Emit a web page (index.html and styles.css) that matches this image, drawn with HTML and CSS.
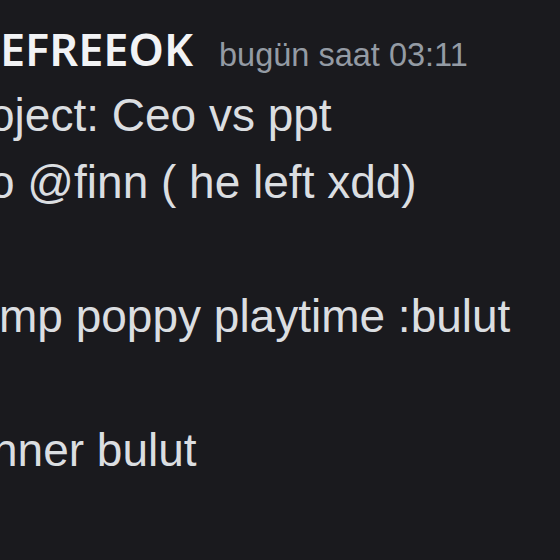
FILE: index.html
```html
<!DOCTYPE html>
<html lang="tr">
<head>
<meta charset="utf-8">
<link rel="stylesheet" href="styles.css">
</head>
<body>
<div class="chat">
  <div class="message">
    <div class="header">
      <span class="username">EFREEOK</span>
      <span class="timestamp">bugün saat 03:11</span>
    </div>
    <div class="content">
      <div class="line cut-o">oject: Ceo vs ppt</div>
      <div class="line cut-o">o @finn ( he left xdd)</div>
      <div class="line empty">&nbsp;</div>
      <div class="line cut-m">mp poppy playtime :bulut</div>
      <div class="line empty">&nbsp;</div>
      <div class="line cut-n">nner bulut</div>
    </div>
  </div>
</div>
</body>
</html>
```

FILE: styles.css
```css
html, body {
  margin: 0;
  padding: 0;
  background: #1a1a1e;
  overflow: hidden;
}
.chat {
  width: 560px;
  height: 560px;
  overflow: hidden;
  font-family: "Liberation Sans", Arial, sans-serif;
}
.message {
  padding-top: 15px;
}
.header {
  display: flex;
  align-items: baseline;
  gap: 26px;
  height: 67px;
  line-height: 67px;
}
.username {
  color: #f2f3f5;
  font-family: "Noto Sans", "Liberation Sans", sans-serif;
  font-size: 45px;
  font-weight: 600;
}
.timestamp {
  color: #949ba4;
  font-size: 32.5px;
  font-weight: 400;
}
.content {
  color: #dbdee1;
  font-size: 46px;
  line-height: 67px;
}
.line {
  white-space: nowrap;
}
.cut-o { margin-left: -11px; }
.cut-m { margin-left: -1px; }
.cut-n { margin-left: -8px; }
```
